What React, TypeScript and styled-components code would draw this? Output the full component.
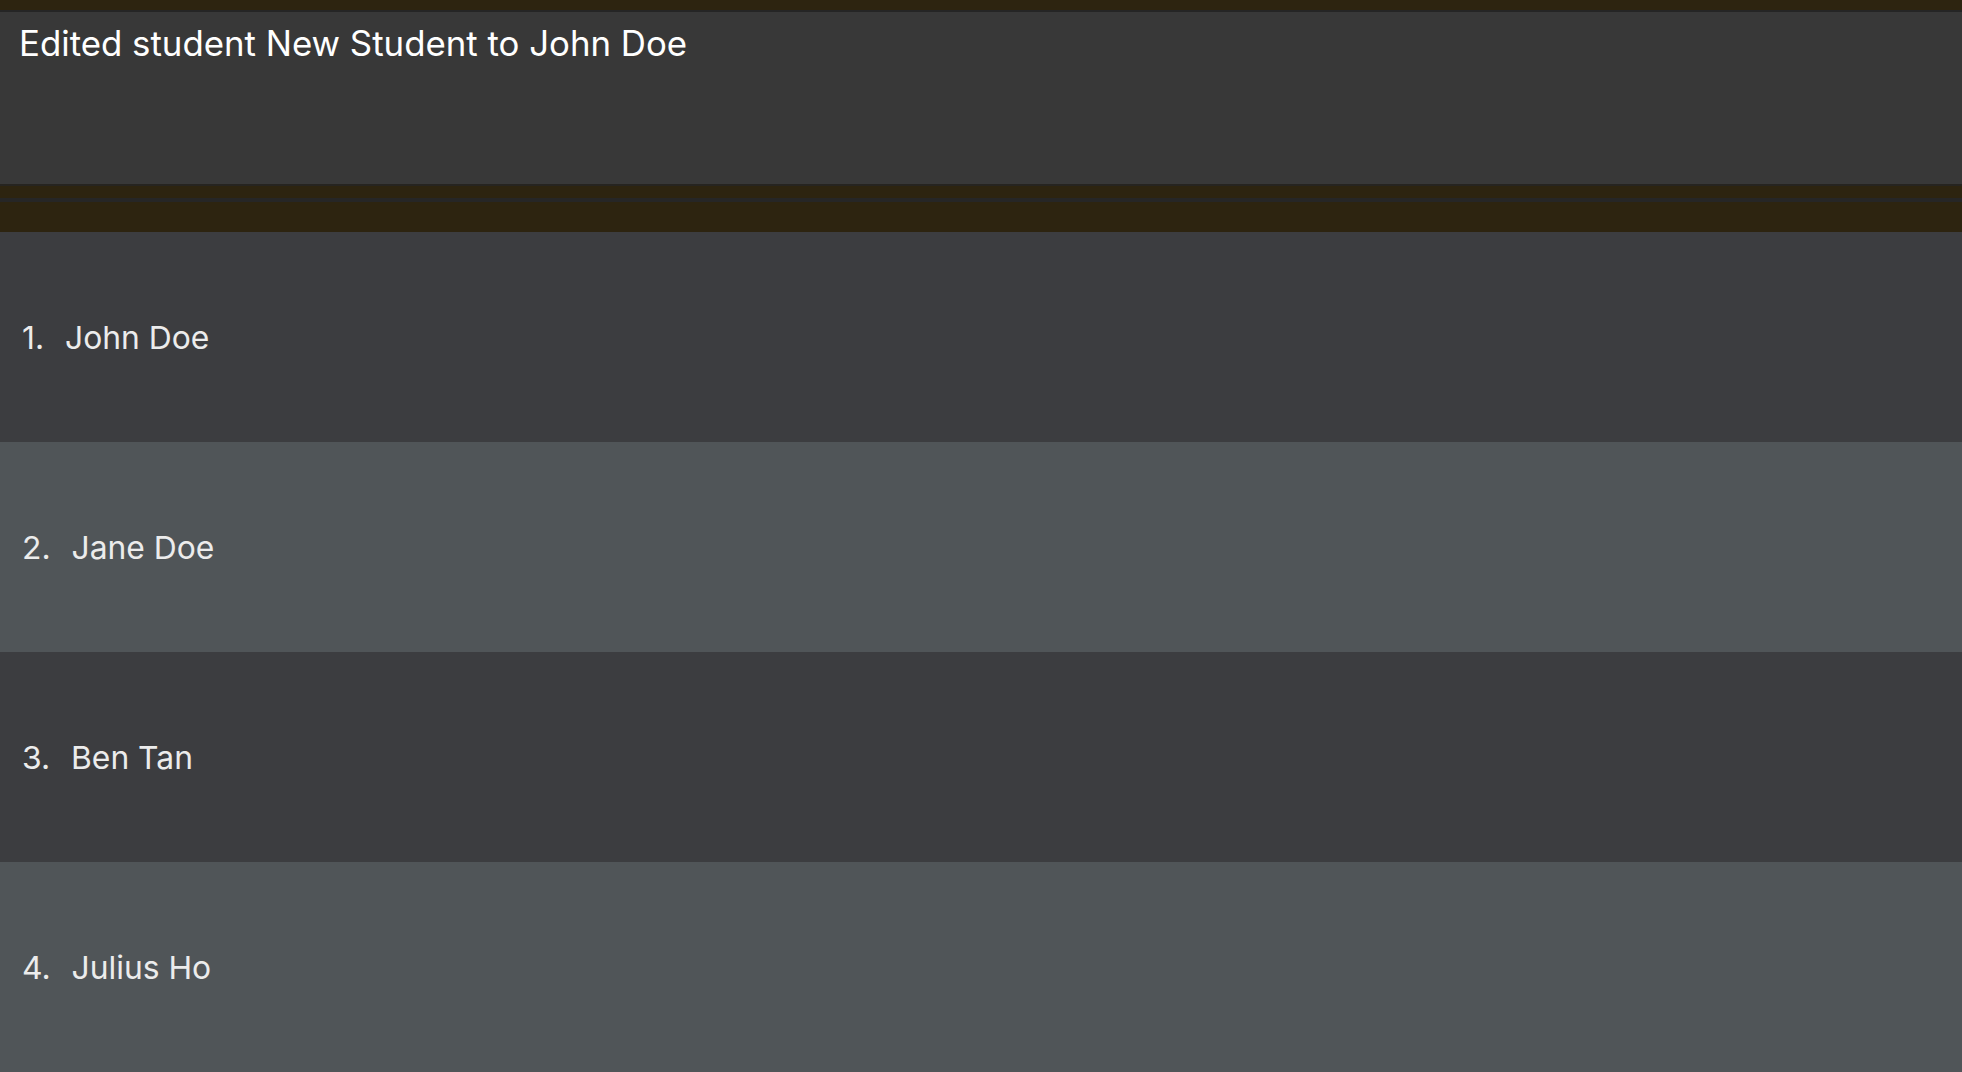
import React from "react";
import styled, { createGlobalStyle } from "styled-components";

const Global = createGlobalStyle`
  html, body { margin: 0; padding: 0; background: #2d2410; }
  body { width: 1962px; height: 1072px; overflow: hidden; }
  #root { width: 100%; height: 100%; }
`;

const Page = styled.div`
  display: flex;
  flex-direction: column;
  width: 1962px;
  height: 1072px;
  background: #2d2410;
`;

const Band = styled.div<{ $h: number; $c: string }>`
  height: ${(p) => p.$h}px;
  flex: none;
  background: ${(p) => p.$c};
`;

const ResultPanel = styled.div`
  height: 172px;
  flex: none;
  background: #383838;
  box-sizing: border-box;
  padding: 9px 0 0 19px;
  font-family: Inter, Roboto, "Liberation Sans", sans-serif;
  font-size: 34.8px;
  line-height: 44px;
  color: #ffffff;
`;

const List = styled.div`
  display: flex;
  flex-direction: column;
  flex: 1;
`;

const Row = styled.div<{ $alt: boolean }>`
  height: 210px;
  flex: none;
  display: flex;
  align-items: center;
  padding-left: 22px;
  background: ${(p) => (p.$alt ? "#505558" : "#3c3d40")};
  font-family: Inter, "Open Sans", sans-serif;
  font-size: 31.8px;
  color: #ececec;
`;

const Index = styled.span`
  margin-right: 12px;
`;

const students = ["John Doe", "Jane Doe", "Ben Tan", "Julius Ho"];

export default function App() {
  return (
    <>
      <Global />
      <Page>
        <Band $h={10} $c="#2d2410" />
        <Band $h={2} $c="#252525" />
        <ResultPanel>Edited student New Student to John Doe</ResultPanel>
        <Band $h={2} $c="#262420" />
        <Band $h={12} $c="#2d2410" />
        <Band $h={4} $c="#262626" />
        <Band $h={30} $c="#2d2410" />
        <List>
          {students.map((s, i) => (
            <Row key={s} $alt={i % 2 === 1}>
              <Index>{i + 1}.&nbsp;</Index>
              {s}
            </Row>
          ))}
        </List>
      </Page>
    </>
  );
}
